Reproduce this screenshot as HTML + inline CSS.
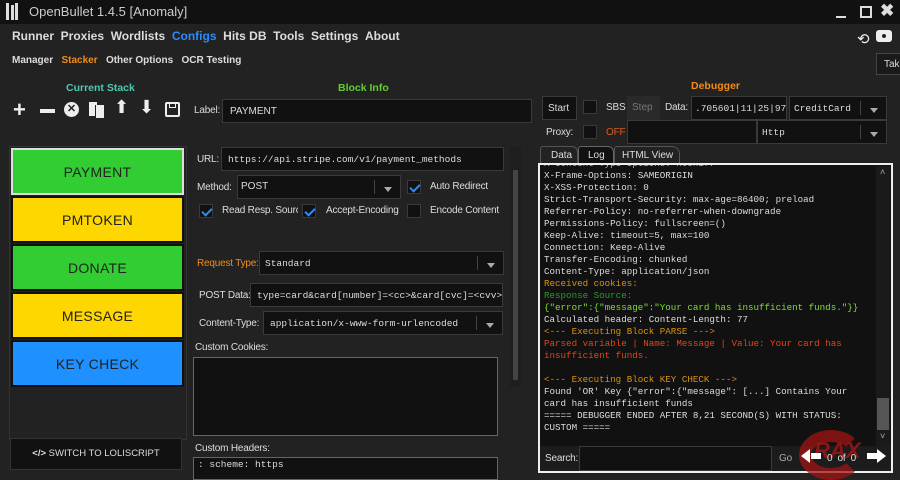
<!DOCTYPE html><html><head><style>
*{box-sizing:border-box;margin:0;padding:0}
body{width:900px;height:480px;background:#222;font-family:"Liberation Sans",sans-serif;color:#ddd;position:relative;overflow:hidden;font-size:11px}
.a{position:absolute}
.in{position:absolute;background:#111;border:1px solid #3a3a3a}
.mono{font-family:"Liberation Mono",monospace}
.lbl{position:absolute;font-size:10px;color:#ddd;letter-spacing:-0.2px;white-space:nowrap}
.cb{position:absolute;width:14px;height:14px;background:#111;border:1px solid #3a3a3a}
.cb.on::after{content:"";position:absolute;left:4px;top:1px;width:4px;height:8px;border:solid #2a8cff;border-width:0 2px 2px 0;transform:rotate(45deg)}
.dd{position:absolute;right:0;top:4px;bottom:4px;width:26px;border-left:1px solid #444}
.dd::after{content:"";position:absolute;left:9px;top:7px;border:4px solid transparent;border-top:5px solid #aaa}
.st{position:absolute;left:11px;width:173px;height:47px;font-size:14px;color:#222;display:flex;align-items:center;justify-content:center;border:2px solid #111;letter-spacing:.3px}
.log{position:absolute;left:4px;width:334px;font-family:"Liberation Mono",monospace;font-size:9.2px;line-height:12px;color:#ddd;white-space:pre}
</style></head><body>
<div class="a" style="left:0;top:0;width:900px;height:24px;background:#111"></div>
<div class="a" style="left:6px;top:3px;width:3px;height:17px;background:#ddd"></div>
<div class="a" style="left:11px;top:5px;width:3px;height:15px;background:#ddd"></div>
<div class="a" style="left:15px;top:3px;width:3px;height:17px;background:#ddd"></div>
<div class="a" style="left:29px;top:4px;font-size:13px;color:#ccc">OpenBullet 1.4.5 [Anomaly]</div>
<div class="a" style="left:836px;top:16px;width:10px;height:2px;background:#ddd"></div>
<div class="a" style="left:860px;top:6px;width:12px;height:12px;border:2px solid #ddd"></div>
<div class="a" style="left:880px;top:1px;font-size:17px;font-weight:bold;color:#ddd">✖</div>
<div class="a" style="left:12px;top:29px;font-size:12px;font-weight:bold;color:#ddd;word-spacing:0">Runner&nbsp;&nbsp;Proxies&nbsp;&nbsp;Wordlists&nbsp;&nbsp;<span style="color:#2a8cff">Configs</span>&nbsp;&nbsp;Hits DB&nbsp;&nbsp;Tools&nbsp;&nbsp;Settings&nbsp;&nbsp;About</div>
<div class="a" style="left:12px;top:55px;font-size:10px;font-weight:bold;color:#ddd">Manager&nbsp;&nbsp;&nbsp;<span style="color:#f08c1a">Stacker</span>&nbsp;&nbsp;&nbsp;Other Options&nbsp;&nbsp;&nbsp;OCR Testing</div>
<div class="a" style="left:857px;top:30px;font-size:15px;color:#eee">⟲</div>
<div class="a" style="left:876px;top:30px;width:16px;height:12px;background:#eee;border-radius:3px"><div class="a" style="left:4px;top:2px;width:8px;height:8px;border-radius:50%;background:#222;border:2px solid #eee"></div></div>
<div class="a" style="left:876px;top:53px;width:30px;height:22px;border:1px solid #444;background:#1a1a1a;font-size:10px;padding:5px 0 0 7px">Tak</div>
<div class="a" style="left:66px;top:82px;font-size:10.5px;font-weight:bold;color:#4ec9b0">Current Stack</div>
<div class="a" style="left:338px;top:82px;font-size:10.5px;font-weight:bold;color:#6c3">Block Info</div>
<div class="a" style="left:691px;top:80px;font-size:10.5px;font-weight:bold;color:#f08c1a">Debugger</div>
<div class="a" style="left:13px;top:97px;font-size:22px;font-weight:bold;color:#eee;line-height:26px">+</div>
<div class="a" style="left:40px;top:109px;width:15px;height:4px;background:#eee"></div>
<div class="a" style="left:64px;top:102px;width:15px;height:15px;border-radius:50%;background:#eee;color:#222;font-size:11px;font-weight:bold;text-align:center;line-height:15px">✕</div>
<div class="a" style="left:89px;top:102px;width:8px;height:14px;background:#eee"></div><div class="a" style="left:95px;top:105px;width:9px;height:13px;background:#eee;border-left:1px solid #222"></div>
<div class="a" style="left:114px;top:97px;font-size:18px;color:#eee">⬆</div>
<div class="a" style="left:139px;top:97px;font-size:18px;color:#eee">⬇</div>
<div class="a" style="left:165px;top:102px;width:15px;height:15px;border:2px solid #eee;border-radius:2px"><div class="a" style="left:2px;top:0;width:7px;height:4px;border:1px solid #eee;border-top:0"></div></div>
<div class="lbl" style="left:194px;top:105px">Label:</div>
<div class="in" style="left:222px;top:99px;width:310px;height:24px;font-size:10px;padding:6px 7px;color:#ddd">PAYMENT</div>
<!-- stack -->
<div class="a" style="left:9px;top:146px;width:178px;height:294px;border:1px solid #333"></div>
<div class="st" style="top:148px;background:#32cd32;border-color:#ddd">PAYMENT</div>
<div class="st" style="top:196px;background:#ffd700">PMTOKEN</div>
<div class="st" style="top:244px;background:#32cd32">DONATE</div>
<div class="st" style="top:292px;background:#ffd700">MESSAGE</div>
<div class="st" style="top:340px;background:#1e90ff">KEY CHECK</div>
<div class="a" style="left:10px;top:438px;width:172px;height:32px;background:#111;border:1px solid #333;font-size:9.5px;color:#ddd;text-align:center;line-height:30px"><b>&lt;/&gt;</b> SWITCH TO LOLISCRIPT</div>
<!-- middle -->
<div class="a" style="left:510px;top:147px;width:11px;height:240px;background:#1e1e1e"></div>
<div class="a" style="left:513px;top:170px;width:5px;height:210px;background:#444"></div>
<div class="lbl" style="left:197px;top:154px">URL:</div>
<div class="in mono" style="left:221px;top:147px;width:283px;height:24px;font-size:9.5px;padding:6px 6px">https://api.stripe.com/v1/payment_methods</div>
<div class="lbl" style="left:197px;top:182px">Method:</div>
<div class="in" style="left:237px;top:175px;width:164px;height:24px;font-size:10px;padding:5px 3px">POST<div class="dd"></div></div>
<div class="cb on" style="left:407px;top:180px"></div><div class="lbl" style="left:430px;top:181px">Auto Redirect</div>
<div class="cb on" style="left:199px;top:204px"></div><div class="lbl" style="left:222px;top:205px;width:76px;overflow:hidden">Read Resp. Source</div>
<div class="cb on" style="left:302px;top:204px"></div><div class="lbl" style="left:326px;top:205px">Accept-Encoding</div>
<div class="cb" style="left:407px;top:204px"></div><div class="lbl" style="left:430px;top:205px">Encode Content</div>
<div class="lbl" style="left:197px;top:258px;color:#f08c1a">Request Type:</div>
<div class="in mono" style="left:259px;top:251px;width:245px;height:24px;font-size:9.5px;padding:6px 5px">Standard<div class="dd"></div></div>
<div class="lbl" style="left:199px;top:290px">POST Data:</div>
<div class="in mono" style="left:250px;top:283px;width:253px;height:24px;font-size:9.5px;padding:6px 6px;overflow:hidden;white-space:nowrap">type=card&amp;card[number]=&lt;cc&gt;&amp;card[cvc]=&lt;cvv&gt;&amp;ca</div>
<div class="lbl" style="left:199px;top:318px">Content-Type:</div>
<div class="in mono" style="left:263px;top:311px;width:240px;height:24px;font-size:9.5px;padding:6px 6px">application/x-www-form-urlencoded<div class="dd"></div></div>
<div class="lbl" style="left:195px;top:342px;font-size:10px">Custom Cookies:</div>
<div class="in" style="left:193px;top:357px;width:305px;height:79px;border-color:#666"></div>
<div class="lbl" style="left:195px;top:443px;font-size:10px">Custom Headers:</div>
<div class="in mono" style="left:193px;top:457px;width:305px;height:23px;border-color:#666;font-size:9.5px;padding:1px 4px">: scheme: https</div>
<!-- debugger -->
<div class="in" style="left:542px;top:96px;width:35px;height:24px;font-size:10px;padding:6px 5px;color:#ddd">Start</div>
<div class="cb" style="left:583px;top:100px"></div>
<div class="lbl" style="left:606px;top:102px">SBS</div>
<div class="a" style="left:627px;top:96px;width:33px;height:24px;background:#2a2a2a;font-size:10px;color:#777;padding:6px 5px">Step</div>
<div class="lbl" style="left:665px;top:102px">Data:</div>
<div class="in mono" style="left:691px;top:96px;width:96px;height:24px;font-size:9.5px;padding:6px 3px;white-space:nowrap;overflow:hidden">.705601|11|25|978</div>
<div class="in mono" style="left:789px;top:96px;width:98px;height:24px;font-size:9.5px;padding:6px 4px">CreditCard<div class="dd"></div></div>
<div class="lbl" style="left:546px;top:127px">Proxy:</div>
<div class="cb" style="left:583px;top:125px"></div>
<div class="lbl" style="left:606px;top:127px;color:#e05a1a">OFF</div>
<div class="in" style="left:627px;top:120px;width:130px;height:24px"></div>
<div class="in mono" style="left:757px;top:120px;width:130px;height:24px;font-size:9.5px;padding:6px 4px">Http<div class="dd"></div></div>
<div class="a" style="left:540px;top:146px;width:38px;height:17px;border:1px solid #555;border-bottom:0;border-radius:3px 6px 0 0;font-size:10px;padding:3px 0 0 10px;background:#222">Data</div>
<div class="a" style="left:578px;top:146px;width:36px;height:18px;border:1px solid #666;border-bottom:0;border-radius:3px 6px 0 0;font-size:10px;padding:3px 0 0 9px;background:#111">Log</div>
<div class="a" style="left:614px;top:146px;width:66px;height:17px;border:1px solid #555;border-bottom:0;border-radius:3px 8px 0 0;font-size:10px;padding:3px 0 0 7px;background:#222">HTML View</div>
<div class="a" style="left:538px;top:163px;width:355px;height:310px;border:2px solid #eee;background:#111;overflow:hidden">
<div class="log" style="top:-7px"><span style="color:#e8a0a0">X-Content-Type-Options: nosniff</span>
X-Frame-Options: SAMEORIGIN
X-XSS-Protection: 0
Strict-Transport-Security: max-age=86400; preload
Referrer-Policy: no-referrer-when-downgrade
Permissions-Policy: fullscreen=()
Keep-Alive: timeout=5, max=100
Connection: Keep-Alive
Transfer-Encoding: chunked
Content-Type: application/json
<span style="color:#d8920e">Received cookies:</span>
<span style="color:#2a9a2a">Response Source:</span>
<span style="color:#7fdc3a">{"error":{"message":"Your card has insufficient funds."}}</span>
Calculated header: Content-Length: 77
<span style="color:#d8920e">&lt;--- Executing Block PARSE ---&gt;</span>
<span style="color:#e0461a">Parsed variable | Name: Message | Value: Your card has
insufficient funds.</span>

<span style="color:#d8920e">&lt;--- Executing Block KEY CHECK ---&gt;</span>
Found 'OR' Key {"error":{"message": [...] Contains Your
card has insufficient funds
===== DEBUGGER ENDED AFTER 8,21 SECOND(S) WITH STATUS:
CUSTOM =====</div>
<div class="a" style="left:336px;top:1px;width:14px;height:280px;background:#1a1a1a"></div>
<div class="a" style="left:337px;top:233px;width:12px;height:32px;background:#555"></div>
<div class="a" style="left:340px;top:2px;font-size:9px;color:#aaa">˄</div>
<div class="a" style="left:340px;top:266px;font-size:9px;color:#aaa">˅</div>
<div class="a" style="left:0;top:281px;width:351px;height:25px;background:#1c1c1c"></div>
</div>
<div class="lbl" style="left:545px;top:453px">Search:</div>
<div class="in" style="left:579px;top:446px;width:193px;height:25px"></div>
<div class="lbl" style="left:779px;top:453px;color:#aaa">Go</div>
<div class="a" style="left:799px;top:430px;width:64px;height:50px;border-radius:50%;border:12px solid rgba(160,20,20,.75);border-right-color:transparent"></div>
<div class="a" style="left:814px;top:438px;font-size:22px;font-weight:bold;font-style:italic;color:rgba(170,20,20,.8)">RAX</div>
<div class="a" style="left:811px;top:453px;width:10px;height:6px;background:#fff"></div>
<div class="a" style="left:801px;top:449px;border:7px solid transparent;border-right:9px solid #fff;border-left:0"></div>
<div class="lbl" style="left:827px;top:453px;color:#ddd">0&nbsp;&nbsp;of&nbsp;&nbsp;0</div>
<div class="a" style="left:867px;top:453px;width:10px;height:6px;background:#fff"></div>
<div class="a" style="left:877px;top:449px;border:7px solid transparent;border-left:9px solid #fff;border-right:0"></div>
</body></html>
